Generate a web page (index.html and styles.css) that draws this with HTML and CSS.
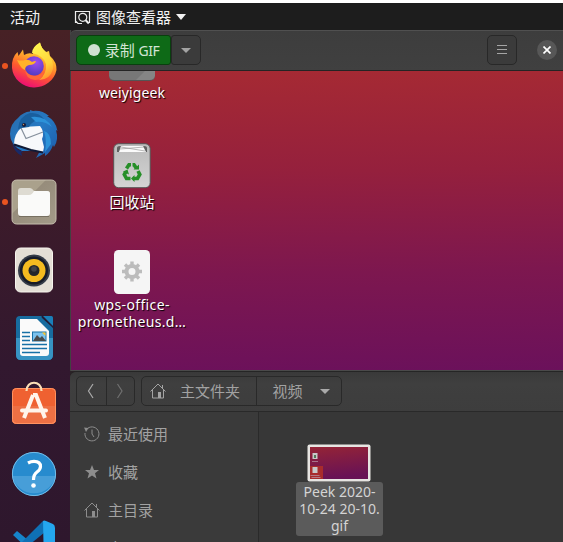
FILE: index.html
```html
<!DOCTYPE html>
<html lang="zh-CN">
<head>
<meta charset="utf-8">
<title>桌面</title>
<link rel="stylesheet" href="styles.css">
</head>
<body>
<header class="topbar">
  <span class="activities">活动</span>
  <svg class="app-icon" width="17" height="15" viewBox="0 0 17 15" fill="none" stroke="#eee" stroke-width="1.200"><path d="M3 12.500H1.500V1.500H15.500V12.500H14.500M1.500 11l2.500 2.500H8"/><circle cx="8.800" cy="7.300" r="4"/><path d="M11.500 10l3.300 3.500" stroke-width="2"/></svg>
  <span class="app-name">图像查看器</span>
  <svg width="10" height="6" viewBox="0 0 10 6"><path d="M0 0h10L5 6z" fill="#f2f2f2"/></svg>
</header>
<div class="screen">
  <nav class="dock">
    <div class="launcher running">
      <svg width="48" height="48" viewBox="0 0 48 48">
        <defs>
          <linearGradient id="fx" x1=".75" y1="0" x2=".35" y2="1"><stop offset="0" stop-color="#fff04b"/><stop offset=".35" stop-color="#ffb22b"/><stop offset=".65" stop-color="#ff5b2e"/><stop offset="1" stop-color="#ec0b76"/></linearGradient>
          <radialGradient id="fxg" cx=".6" cy=".3" r=".75"><stop offset="0" stop-color="#a04bf0"/><stop offset="1" stop-color="#4b3bbd"/></radialGradient>
          <linearGradient id="fxt" x1=".5" y1="0" x2=".8" y2="1"><stop offset="0" stop-color="#fff44f"/><stop offset=".6" stop-color="#ffd23a"/><stop offset="1" stop-color="#ff8a2a"/></linearGradient>
        </defs>
        <path d="M3 17Q5 12 7.500 10L8.500 14L13 7.500L14 13Q19 10 23 12Q22 6 30 .5Q31 6 36 10L39 9L40 14Q47 20 46.500 28A22.500 21.500 0 0 1 2 26Q1.500 21 3 17z" fill="url(#fx)"/>
        <path d="M22 11Q22 5 30 .5Q31 6 36 10Q44 17 43 27Q40 38 29 38Q37 32 36 22Q34 14 22 11z" fill="url(#fxt)"/>
        <circle cx="24" cy="24" r="9.800" fill="url(#fxg)"/>
        <path d="M7 18Q12 19 15 18Q19 17 22 20Q24 19 26 19Q25 23 19 23Q15 24 15 28Q11 27 7 18z" fill="#ffb22a"/>
        <path d="M15 26Q17 34 26 34Q31 33 34 29Q33 38 25 38Q15 37 15 26z" fill="#ff6738"/>
      </svg>
    </div>
    <div class="launcher">
      <svg width="50" height="50" viewBox="0 0 50 50">
        <defs><linearGradient id="tb" x1="0" y1="0" x2="1" y2="1"><stop offset="0" stop-color="#2a6cab"/><stop offset=".5" stop-color="#2579c4"/><stop offset="1" stop-color="#1d5aa8"/></linearGradient></defs>
        <path d="M9 9Q14 3 21 2.500L21 1L24 2Q33 1 40 7L38 7Q47 12 48.500 22L47 21Q50 31 45 38L44 36Q42 43 36 47L36 44L27 49L31 42L13 42Q1 36 1 25Q1 15 9 9z" fill="url(#tb)"/>
        <path d="M3 34Q7 41 13 42L14 44L12 43L13 47Q5 43 3 34z" fill="#172a69"/>
        <path d="M13 18L31 17Q36 23 33 30L35 38L34 43Q25 42 20 40L5 35Q5 25 13 18z" fill="#f7f8fb"/>
        <path d="M12 19L17 29.500L34 23" fill="none" stroke="#858f9c" stroke-width="1.200"/>
        <path d="M5 35.500L22 41L34 43.500" fill="none" stroke="#111a36" stroke-width="2"/>
        <path d="M9 20Q10 7 21 4Q30 3 35 10Q24 10 20 18L13 19z" fill="#195f9e"/>
        <path d="M22 8Q36 6 43 18Q36 12 27 13zM35 22Q42 24 42 35L36 43Q38 31 35 22z" fill="#2c92d9"/>
        <circle cx="15" cy="16" r="2" fill="#151c3b"/><circle cx="14.500" cy="15.500" r=".7" fill="#c98a58"/>
      </svg>
    </div>
    <div class="launcher running">
      <svg width="46" height="46" viewBox="0 0 46 46">
        <defs><linearGradient id="fm" x1="0" y1="0" x2="1" y2="1"><stop offset="0" stop-color="#aaa18c"/><stop offset=".38" stop-color="#aaa18c"/><stop offset=".39" stop-color="#968c7b"/><stop offset="1" stop-color="#a39b89"/></linearGradient></defs>
        <rect x="1" y="1" width="44" height="44" rx="4.500" fill="url(#fm)" stroke="#c5bdad"/>
        <path d="M7 12Q7 9 10 9H19Q21 9 23 12H36Q39 12 39 15V20H7z" fill="#dedbd2"/>
        <path d="M7 16H18Q21 16 23 12H36Q39 12 39 15V34Q39 37 36 37H10Q7 37 7 34z" fill="#fafaf9"/>
        <path d="M8 37.500H38" stroke="#777061"/>
      </svg>
    </div>
    <div class="launcher">
      <svg width="46" height="46" viewBox="0 0 46 46">
        <rect x="4.500" y="1" width="37" height="44" rx="5" fill="#e4dfd6" stroke="#f7f4ee"/>
        <circle cx="23" cy="23.500" r="16" fill="#353c48"/><circle cx="23" cy="23.500" r="14" fill="#171c29"/><circle cx="23" cy="23.500" r="11.500" fill="#f4bb20"/><circle cx="23" cy="23.500" r="5.500" fill="#24272b"/><circle cx="23" cy="22" r="2.800" fill="#424548"/>
      </svg>
    </div>
    <div class="launcher">
      <svg width="46" height="46" viewBox="0 0 46 46">
        <path d="M9 1H40Q42 1 42 4V40Q42 45 37 45H10Q5 45 5 40V5Q5 1 9 1z" fill="#176c9f"/>
        <path d="M5 23H42V40Q42 45 37 45H10Q5 45 5 40z" fill="#3793c2"/>
        <path d="M9 4H26L38 16V38Q38 41 35 41H12Q9 41 9 38z" fill="#fafafa"/>
        <path d="M30 0L43 12V11L42 10V12L32 1zM31 2L42 12" fill="#251c35" stroke="#251c35" stroke-width="1.500"/><path d="M32 1H40Q42 1 42 4V11z" fill="#1a7fb9"/>
        <path d="M11 17.500h8M11 21.500h8M11 25.500h8M11 29.500h25M11 33.500h25M11 37.500h18" stroke="#1670a6" stroke-width="1.700"/>
        <rect x="21.500" y="17" width="13.500" height="9" fill="#7bc2ed" stroke="#1670a6"/>
        <path d="M22 26L26 20L29 23L31 21L35 26z" fill="#4a4c4c"/><path d="M31 17.500H34.500V21z" fill="#fac52d"/>
      </svg>
    </div>
    <div class="launcher store">
      <svg width="46" height="46" viewBox="0 0 46 46">
        <rect x="1" y="7" width="44" height="36" rx="4.500" fill="#ef6131"/><path d="M1 25H45V39Q45 43 40 43H6Q1 43 1 39z" fill="#ed7044"/><rect x="1.500" y="7.500" width="43" height="35" rx="4" fill="none" stroke="#ff9260"/>
        <path d="M15.500 10C15.500 -1 30.500 -1 30.500 10" fill="none" stroke="#fbdfb7" stroke-width="2.200"/>
        <path d="M22 14L13 37M22 14H25L34 37" fill="none" stroke="#fff5ec" stroke-width="4"/><path d="M11 29.500H35" stroke="#fff5ec" stroke-width="4" stroke-linecap="round"/>
      </svg>
    </div>
    <div class="launcher help">
      <svg width="46" height="46" viewBox="0 0 46 46"><circle cx="23" cy="23" r="22" fill="#278bce"/><path d="M1.500 25H44.500A22 22 0 0 1 1.500 25z" fill="#479ed8"/><circle cx="23" cy="23" r="21.600" fill="none" stroke="#75bce7"/><path d="M17 12Q20 10.300 23 10.300Q29.500 10.300 29.500 15.500Q29.500 18.500 26 21Q22.500 23.500 22.500 29" fill="none" stroke="#fff" stroke-width="3.200"/><circle cx="22.500" cy="34.500" r="2.300" fill="#fff"/></svg>
    </div>
    <div class="launcher code">
      <svg width="46" height="46" viewBox="0 0 46 46"><path d="M2 15L6 11L23 25L45 42L33 44z" fill="#1684ca"/><path d="M2 31L32 1L34 12L6 35z" fill="#0f70b5"/><path d="M32 1Q33 0 35 1L42 4Q44 5 44 8V40L33 45z" fill="#24a6ee"/></svg>
    </div>
  </nav>
  <main class="windows">
    <section class="recorder">
      <div class="recorder-bar">
        <button class="record"><i></i><span>录制 <span class="format">GIF</span></span></button>
        <button class="record-menu"><svg width="10" height="5" viewBox="0 0 10 5"><path d="M0 0h10L5 5z" fill="#a3a3a3"/></svg></button>
        <button class="menu"><svg width="10" height="10" viewBox="0 0 10 10"><path d="M0 .5h10M0 4.500h10M0 8.500h10" stroke="#a5a5a5"/></svg></button>
        <button class="close"><svg width="8" height="8" viewBox="0 0 8 8"><path d="M.5 .5L7.500 7.500M7.500 .5L.5 7.500" stroke="#fff" stroke-width="1.700"/></svg></button>
      </div>
      <div class="desktop">
        <div class="item home"><span class="drive"></span><span class="label">weiyigeek</span></div>
        <div class="item trash">
          <svg width="38" height="46" viewBox="0 0 38 46"><defs><linearGradient id="tr" x1="0" y1="0" x2="0" y2="1"><stop offset="0" stop-color="#bababa"/><stop offset="1" stop-color="#d4d4d4"/></linearGradient></defs><rect x=".7" y=".7" width="36.500" height="44" rx="5" fill="url(#tr)" stroke="#555"/><path d="M4 8V5Q4 3 7 3H31Q34 3 34 5V9H4z" fill="#616161"/><path d="M6 9L8 3H30L33 9z" fill="#fafafa"/><path d="M7 6L31 4M8 4L32 8" stroke="#999" stroke-width=".7"/>
          <g fill="none" stroke="#268f28" stroke-width="3.600"><path d="M13.500 25.500L16 21.700H18"/><path d="M19.500 21.700H21L23.200 25"/><path d="M25 28L26.800 31.500L24.500 35.500H20.500"/><path d="M17.500 35.500H13.500L11.300 31.500L12.700 29"/></g><path d="M20.500 26.500h5.500v-5zM21.500 32v7l-3.500-3.500zM10 28.500l4.500-2 1.500 5z" fill="#268f28"/></svg>
          <span class="label">回收站</span>
        </div>
        <div class="item wps">
          <svg width="38" height="46" viewBox="0 0 38 46"><rect x="1" y="1" width="36" height="44" rx="4.500" fill="#f5f5f5"/><g transform="translate(19 22.500)"><circle r="5.500" fill="none" stroke="#bcbcbc" stroke-width="4"/><g stroke="#bcbcbc" stroke-width="3.400"><path d="M0 -10V-6M0 6V10M-10 0H-6M6 0H10M-7 -7L-4.500 -4.500M4.500 4.500L7 7M-7 7L-4.500 4.500M4.500 -4.500L7 -7"/></g></g></svg>
          <span class="label">wps-office-<br>prometheus.d…</span>
        </div>
      </div>
    </section>
    <section class="files">
      <div class="files-bar">
        <div class="group nav"><button><svg width="8" height="16" viewBox="0 0 8 16"><path d="M6 1L1.500 8L6 15" fill="none" stroke="#aaa" stroke-width="1.200"/></svg></button><button><svg width="8" height="16" viewBox="0 0 8 16"><path d="M1.500 1L6 8L1.500 15" fill="none" stroke="#707070" stroke-width="1.200"/></svg></button></div>
        <div class="group path"><button class="crumb-home"><svg width="16" height="16" viewBox="0 0 16 16" fill="none" stroke="#a3a3a3"><path d="M.5 8.500L8 1L15.500 8.500M2.500 7V15H13.500V7M12.500 5V2"/><path d="M8 9h3v6H8z" fill="#a3a3a3" stroke="none"/></svg>主文件夹</button><button class="crumb-video">视频<svg width="10" height="5" viewBox="0 0 10 5"><path d="M0 0h10L5 5z" fill="#aaa"/></svg></button></div>
      </div>
      <div class="files-body">
        <aside class="places">
          <div class="place"><svg width="16" height="16" viewBox="0 0 16 16" fill="none" stroke="#8d8d8d"><path d="M2.500 3.500A7 7 0 1 1 1 7M8 3.500V8l2 3"/><path d="M0 1.500L4.500 2L2 6z" fill="#8d8d8d" stroke="none"/></svg>最近使用</div>
          <div class="place"><svg width="16" height="16" viewBox="0 0 16 16"><path d="M8 1l2 5h5l-4 3.300 1.500 5.200L8 11.400l-4.500 3.100L5 9.300 1 6h5z" fill="#8d8d8d"/></svg>收藏</div>
          <div class="place"><svg width="16" height="16" viewBox="0 0 16 16" fill="none" stroke="#8d8d8d"><path d="M.5 8.500L8 1L15.500 8.500M2.500 7V15H13.500V7M12.500 5V2"/><path d="M8 9h3v6H8z" fill="#8d8d8d" stroke="none"/></svg>主目录</div>
          <div class="place"><svg width="16" height="16"></svg>桌面</div>
        </aside>
        <div class="folder">
          <div class="file">
            <svg class="thumb" width="64" height="38" viewBox="0 0 64 38"><defs><linearGradient id="th" x1="0" y1="0" x2=".2" y2="1"><stop offset="0" stop-color="#952436"/><stop offset="1" stop-color="#681255"/></linearGradient></defs><rect x=".5" y=".5" width="63" height="37" rx="2" fill="#e7e5e2"/><rect x="3" y="3" width="58" height="32" fill="url(#th)"/><path d="M3 22H16V35H3z" fill="#a82c2c"/><path d="M5.500 9h5v6h-5zM5.500 23h5v6h-5z" fill="#c9c9c9"/><path d="M7 11h2v3H7z" fill="#527a5b"/><path d="M5 17.500h6M3.500 31.500h9M4.500 33.500h9" stroke="#b79baa" stroke-width=".7"/></svg>
            <span class="filename">Peek 2020-<br>10-24 20-10.<br>gif</span>
          </div>
        </div>
      </div>
    </section>
  </main>
</div>
</body>
</html>
```

FILE: styles.css
```css
* { box-sizing: border-box; }
body {
  margin: 0;
  height: 542px;
  overflow: hidden;
  padding-top: 3px;
  background: #fff;
  color: #ddd;
  font: 15px/18px "Noto Sans", "Noto Sans CJK SC", sans-serif;
}
svg { display: block; flex: none; }
button {
  display: flex;
  align-items: center;
  justify-content: center;
  padding: 0;
  border: 1px solid #282828;
  border-radius: 5px;
  background: #3b3b3b;
  color: inherit;
  font: inherit;
}
.topbar {
  display: flex;
  align-items: center;
  height: 27px;
  padding: 1px 0 0 10px;
  background: #1d1d1d;
  color: #f2f2f2;
}
.app-icon { margin: 0 5px 0 34px; }
.app-name { margin-right: 5px; }
.screen { display: flex; height: 512px; overflow: hidden; }
.dock {
  width: 70px;
  flex: none;
  padding-top: 2px;
  background: linear-gradient(#472125, #3c1b2a 35%, #32182f 65%, #2e172d);
}
.launcher {
  position: relative;
  display: flex;
  align-items: center;
  justify-content: center;
  height: 68px;
  padding-right: 2px;
}
.store { padding-bottom: 4px; }
.code { padding-top: 2px; }
.running::before {
  content: "";
  position: absolute;
  left: 2px;
  top: 31px;
  width: 6px;
  height: 6px;
  border-radius: 50%;
  background: #e95420;
}
.windows { flex: 1; min-width: 0; background: #2a2226; }
.recorder { height: 341px; border-left: 1px solid #414141; }
.recorder-bar {
  display: flex;
  align-items: center;
  height: 41px;
  padding: 0 6px 1px 5px;
  margin-left: -1px;
  border-top: 1px solid #505050;
  border-bottom: 1px solid #242424;
  border-radius: 6px 0 0;
  background: linear-gradient(#3d3d3d, #404040);
}
.record {
  width: 95px;
  height: 30px;
  margin-left: 1px;
  background: #0e6a17;
  border-color: #093f0e;
  color: #d3e5d4;
  border-radius: 5px 3px 3px 5px;
}
.record i { width: 12px; height: 12px; margin-right: 5px; border-radius: 50%; background: #cfe1d1; }
.format { font-size: 14px; letter-spacing: -.5px; }
.record-menu { width: 30px; height: 30px; border-radius: 3px 5px 5px 3px; }
.menu { width: 30px; height: 30px; margin-left: auto; }
.close { width: 20px; height: 20px; margin-left: 20px; border: 0; border-radius: 50%; background: #575757; }
.desktop {
  display: flex;
  flex-direction: column;
  align-items: flex-start;
  height: 300px;
  overflow: hidden;
  border-bottom: 1px solid #4a4a4a;
  background: linear-gradient(179deg, #a62a33 0%, #95203d 34%, #7d174f 67%, #6b115b 100%);
  color: #fff;
}
.item { display: flex; flex-direction: column; align-items: center; width: 122px; text-align: center; }
.drive { width: 46px; height: 10px; border-radius: 0 0 5px 5px; background: linear-gradient(135deg, #777 65%, #858585 66%); border-bottom: 1px solid #555; }
.label { text-shadow: 1px 1px 1px #000; white-space: nowrap; font-size: 14px; line-height: 17px; letter-spacing: .1px; }
.home .label { margin-top: 3px; }
.trash { margin-top: 42px; }
.trash .label { margin-top: 4px; font-size: 15px; line-height: 18px; letter-spacing: 0; }
.wps { margin-top: 38px; }
.wps .label { margin-top: 1px; letter-spacing: .35px; }
.files {
  height: 171px;
  border-top: 1px solid #252525;
  border-radius: 7px 0 0;
  background: #3a3a3a;
  color: #a2a2a2;
}
.files-bar {
  display: flex;
  align-items: center;
  gap: 6px;
  height: 40px;
  padding: 0 0 1px 6px;
  border-bottom: 1px solid #292929;
  border-radius: 6px 0 0;
  background: linear-gradient(#393939, #3f3f3f 30%, #3d3d3d);
}
.group { display: flex; height: 30px; border: 1px solid #292929; border-radius: 5px; }
.group button { border: 0; background: transparent; }
.group button + button { border-left: 1px solid #292929; border-radius: 0; }
.nav { width: 59px; }
.nav button { width: 50%; }
.path { width: 201px; }
.crumb-home { width: 114px; padding-right: 8px; gap: 14px; }
.crumb-video { flex: 1; gap: 17px; padding-left: 4px; }
.files-body { display: flex; height: 130px; overflow: hidden; }
.places { width: 189px; flex: none; padding-top: 3px; border-right: 1px solid #2a2a2a; background: #3a3a3a; }
.place { display: flex; align-items: center; gap: 8px; height: 38px; padding-left: 14px; }
.folder { flex: 1; background: #373737; }
.file { display: flex; flex-direction: column; align-items: center; width: 87px; margin: 32px 0 0 37px; }
.thumb { margin-right: 2px; }
.filename { width: 87px; height: 54px; padding-top: 1px; border-radius: 3px; background: #5b5b5b; color: #d4d4d4; text-align: center; font-size: 14px; line-height: 17px; white-space: nowrap; }
```
